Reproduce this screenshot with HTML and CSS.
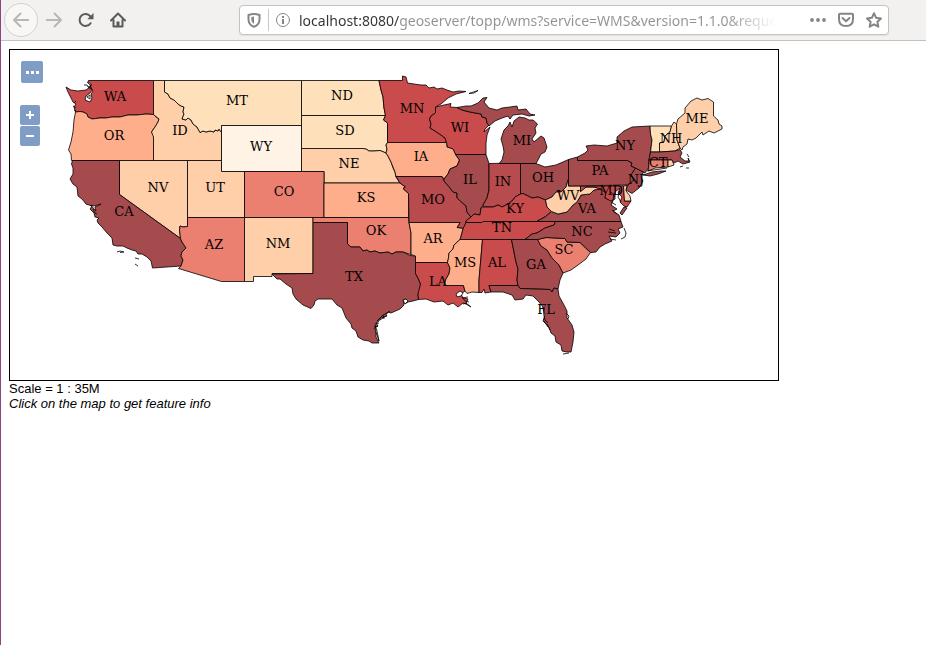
FILE: index.html
```html
<!DOCTYPE html>
<html lang="en">
<head>
<meta charset="utf-8">
<title>OpenLayers map preview</title>
<link rel="stylesheet" href="styles.css">
</head>
<body>
<header class="toolbar">
  <nav class="nav" aria-label="Browser navigation">
    <button class="tool back" type="button" aria-label="Back"><svg viewBox="0 0 16 16"><path d="M15.5 8H1M7.5 1.5L1 8l6.5 6.500"/></svg></button>
    <button class="tool forward" type="button" aria-label="Forward"><svg viewBox="0 0 16 16"><path d="M.5 8H15M8.500 1.500L15 8l-6.500 6.500"/></svg></button>
    <button class="tool" type="button" aria-label="Reload"><svg viewBox="0 0 16 16"><path d="M12.600 11.200A6 6 0 1 1 12.500 4.500"/><path d="M15.500 1v6.200H9.300z" class="solid"/></svg></button>
    <button class="tool" type="button" aria-label="Home"><svg viewBox="0 0 16 16"><path d="M1 8.500L8 1.500l7 7M3.500 8v6.500h9V8"/><path d="M6.500 15V9.500h3V15z" class="solid"/></svg></button>
  </nav>
  <form class="urlbar">
    <button class="mini" type="button" aria-label="Tracking protection"><svg viewBox="0 0 16 16"><path d="M2.500 3Q8 .9 13.500 3V8q-.5 5-5.500 6.800Q3 13 2.500 8z"/><path d="M8 4.500q-1.500.1-2.700.6V8q.3 2.600 2.700 4z" class="solid"/></svg></button>
    <span class="divider"></span>
    <button class="mini info" type="button" aria-label="Site information"><svg viewBox="0 0 16 16"><circle cx="8" cy="8" r="6.500"/><path d="M7 7h2v5H7zM7 4h2v2H7z" class="solid"/></svg></button>
    <input class="address" type="text" aria-label="Address" value="localhost:8080/geoserver/topp/wms?service=WMS&amp;version=1.1.0&amp;request=GetMap">
    <button class="mini action" type="button" aria-label="Page actions"><svg viewBox="0 0 16 16"><g class="solid"><circle cx="2" cy="8" r="1.900"/><circle cx="8" cy="8" r="1.900"/><circle cx="14" cy="8" r="1.900"/></g></svg></button>
    <button class="mini action" type="button" aria-label="Save to Pocket"><svg viewBox="0 0 16 16"><path d="M2 1.800h12q1 0 1 1V7q0 7-7 7T1 7V2.800q0-1 1-1zM4.500 6L8 9.300 11.500 6"/></svg></button>
    <button class="mini action" type="button" aria-label="Bookmark"><svg viewBox="0 0 16 16"><path d="M8 1.200l2.100 4.600 4.900.6-3.600 3.400.9 4.900L8 12.300l-4.300 2.400.9-4.900L1 6.400l4.900-.6z"/></svg></button>
  </form>
</header>

<main class="page">
  <section class="map" aria-label="Map">
    <svg class="states" viewBox="10 50 768 330">
      <g class="shapes">
        <path class="c-red" d="M88.500 80.500H153.500V114.500L146 114 137 115 128 115 120 117 112 117 106 118 100 118 92 119 88 117 87 114 83 112 80 111.500 75.500 112 74 107 76 104 73 102 71 98 68 92 66 87 71 90 78 91 86 90 90 87 91 84 88 82z"/>
        <path class="c-orange" d="M75.500 112L80 111.500 83 112 87 114 88 117 92 119 100 118 106 118 112 117 120 117 128 115 137 115 146 114 153.500 114.500 156 117 159 119 158 122 155 127 151.500 132 154 136 153.500 160.500H71.500L71 154 68.500 150 71 142 73 132 74 120z"/>
        <path class="c-light" d="M153.500 80.500H164.500V92L168 94 170 98 174 100 178 104 181 106 184 107 183 112 184 114 182 119 186 120 188 118 191 120 193 124 197 127 200 132.500 203 131 206 132 210 131 214 132 215 130 218 131 219 129 221.500 132.500V160.500H153.500V137L151.500 132 155 127 158 122 159 119 153.500 114.500z"/>
        <path class="c-cream" d="M164.500 80.500H301.500V125.500H221.500V132.500L219 129 218 131 215 130 214 132 210 131 206 132 203 131 200 132.500 197 127 193 124 191 120 188 118 186 120 182 119 184 114 183 112 184 107 181 106 178 104 174 100 170 98 168 94 164.500 92z"/>
        <path class="c-cream" d="M301.500 80.500H379L381 90 383 97 384 108 385.500 115.500H301.500z"/>
        <path class="c-cream" d="M301.500 115.500H385.500L383.500 120 387.500 123V142.500L386 145 387 149 386 153 380 150.500 374 151 369 151 366 149 363 149H301.500z"/>
        <path class="c-light" d="M301.500 148.500H363L366 149 369 151 374 151 380 150.500 386 153 388 156 391 162 393 168 395 172 396 177 400 183H324V171.500H301.500z"/>
        <path class="c-white" d="M221.500 125.500H301.500V171.500H221.500z"/>
        <path class="c-light" d="M119.500 160.500H187.500V226.500L183 227 180 226 179.500 230 180.500 238.500 119.500 194.500z"/>
        <path class="c-light" d="M187.500 160.500H221.500V171.500H244.500V217.500H187.500z"/>
        <path class="c-coral" d="M244.500 171.500H324V217.500H244.500z"/>
        <path class="c-dark" d="M72.500 160.500H119.500V194.500L180.500 238.500 182 242 186 248 182 252 181 256 183 260 181 266 152.500 268 151 261 147 257 142 254 138 254 136 251 132 250 127 248 123 246 117 246 113 245 112 238 107 233 102 227 98 223 97 220 99 218 95 217 94 213 90 209 92 206 86 204 82 199 78 196 77 187 73 184 70 179 73 174 73 168 71.500 164z"/>
        <path class="c-coral" d="M187.500 217.500H244.500V281.500H221.500L178.500 268.500 181 266 183 260 181 256 182 252 186 248 182 242 180.500 238.500 179.500 230 180 226 183 227 187.500 226.500z"/>
        <path class="c-light" d="M244.500 217.500H313V273.500H272V276.500H253.500V281.500H244.500z"/>
        <path class="c-orange" d="M324 183H400L405.500 187 403 188.500 408.500 193.500V217.500H324z"/>
        <path class="c-coral" d="M313 217.500H408.500L409 222.500 411 233V254.500L403 252 396 252 392 254 388 252 380 253 375 251 370 252 367 250 363 251 360 247 355 247 351 247 347.500 244V222.500H313z"/>
        <path class="c-dark" d="M313 222.500H347.500V244L351 247 355 247 360 247 363 251 367 250 370 252 375 251 380 253 388 252 392 254 396 252 403 252 410 255.500 415.500 256V273.500L418 278 420.500 284 420 291 418 294 418.500 299.500 413 301 408 302 405 304 406 299 403 300 404 305 400 309 391 313 388 312 386 315 387 316 381 318 378 322 376 323 378 326 374 328 376 331 376 337 379 343 372 343 369 341 363 340 358 337 356 331 352 328 351 324 346 318 342 308 337 305 332 299 322 299 318 299 315 301 314 305 311 308.500 303 305 296 299 293 294 292 288 286 284 280 279 277 279 272 274 313 273.500z"/>
        <path class="c-red" d="M379 80.500H402.500V76L406 77 407.500 83 414 84 421 85 426 85 429 88 434 87 437 89 442 88 447 90 453 92 459 91 466 91.500 456 94 448 98 441 104 435.500 107V113L431 116 429.500 119 431 124 430 128 435 131 441 135 445 138 446.500 142.500H387.500V123L383.500 120 385.500 115.500 384 108 383 97 381 90z"/>
        <path class="c-red" d="M435.500 107L444 105 451 103.500 450 107 457 107.500 462 110 470 112 481 114 482 117 486 118 487 123 489 125 485 129 484 132 490 127 487 135 486 143V154.500H455.500L453 149 447 147 446.500 142.500 445 138 441 135 435 131 430 128 431 124 429.500 119 431 116 435.500 113z"/>
        <path class="c-orange" d="M387.500 142.500H446.500L447 147 453 149 455.500 154.500 459.500 160 457 166 450 169 448 174 444 179 442 176.500H396L395 172 391 162 388 156 386 153 387 149 386 145z"/>
        <path class="c-wine" d="M396 176.500H442L444 181 450 188 453 192 457 193 457 198 466 206 467 212 471 217 466 221 466 226 463 228.500 457 227.500 460 222.500H409L408.500 193.500 403 188.500 405.500 187 400 183z"/>
        <path class="c-dark" d="M455.500 154.500H486L489 163.500V190L487 198 483 205 481 208 480 215 474 214 471 217 467 212 466 206 457 198 457 193 453 192 450 188 444 181 444 179 448 174 450 169 457 166 459.500 160z"/>
        <path class="c-wine" d="M489 163.500L520.500 163V194L515 197 513 200 508 204 502 207 498 205 493 207 483 207 483 205 487 198 489 190z"/>
        <path class="c-dark" d="M520.500 163.500H536L545 167 556 165 568.500 159.500V179L566 187 561 192 556 192 552 197 545.500 200 538 197 532 198 523 193.500 520.500 194z"/>
        <path class="c-dark" d="M457 107.500L466 106 471 106 478 103 483 98 487 97.500 484 102 489 108 497 110 502 108 510 107 517 106 518 110 526 109 530 114 535 115 529 116 522 114 513 115 510 119 508 116 502 118 495 121 489 126 487 123 486 118 482 117 481 114 470 112 462 110z"/>
        <path class="c-dark" d="M519 117L525 118 529 120 533 120 537.500 124 535 128 536 133 532 139 534 142 541 136 544 138 547 147 545 152 541 154 538 160 536 163.500 499 163.500 502 160 504 152 503 146 501 139 504 130 508 126 510 122 512 127 514 121z"/>
        <path class="c-red" d="M471 217L474 214 480 215 481 208 483 207 493 207 498 205 502 207 508 204 513 200 515 197 520.500 194 523 193.500 532 198 538 197 545.500 200 547 207 551.500 211.500 545 217 536.500 221.500H483L482 222.500H466L466 221z"/>
        <path class="c-red" d="M466 222.500H482L483 221.500H555.500L554 225 545 228 537 233 532 234 525 239.500H460L463 228.500z"/>
        <path class="c-orange" d="M409 222.500H460L457 227.500 463 228.500 460 239.500 454 245 453 249 449 253 448.500 258 447.500 262.500H415.500V256L411 254.500V233z"/>
        <path class="c-red" d="M415.500 262.500H447.500L450 268 449 274 446 279 444 285.500H463.500L465 291 461 294 463 298 468 299 466 303 471 307 466 304 463 303 458 307 453 303 448 305 443 301 434 302 426 299 418.500 299.500 418 294 420.500 284 418 278 415.500 273.500z"/>
        <path class="c-orange" d="M460 239.500H482.500L479 280V292.500L472 292 467 293.500 465 291 463.500 285.500H444L446 279 449 274 450 268 447.500 262.500 448.500 258 449 253 453 249 454 245z"/>
        <path class="c-red" d="M482.500 239.500H511.500L516 262 518 269 517 280 518 285.500H489L491 292 485 293 484 289 482 292.500 479 292.500V280z"/>
        <path class="c-dark" d="M511.500 239.500H537.500L541 246 547 250 552 258 559 265 563 273 560 280 558 289 554 288 552 292 550 289.500 520 288.500 518 285.500 517 280 518 269 516 262z"/>
        <path class="c-coral" d="M537.500 239.500L546 237.500 565 238.500 567 242 580 242.500 590.500 252.500 586 259 578 265 571 270 563 273 559 265 552 258 547 250 541 246z"/>
        <path class="c-dark" d="M489 285.500H518L520 288.500 550 289.500 552 292 554 288 558 289 559 296 564 305 567 311 567 318 572 325 574 332 573 342 571 352 567 352 562 351 561 345 556 342 555 336 551 333 549 327 546 324 543 321 545 315 543 307 539 302 533 296 526 295 523 299 515 300 512 295 503 292 491 292z"/>
        <path class="c-dark" d="M555.500 221.500H621L623 227 618 229 620 233 616 237 609 236 612 241 605 244 600 247 596 252 590.500 252.500 580 242.500 567 242 565 238.500 546 237.500 537.500 239.500H525L532 234 537 233 545 228 554 225z"/>
        <path class="c-dark" d="M536.500 221.500L545 217 551.500 211.500 558 214 567 212 573 205 577 202 581 195 590 194 594 190 601 189 606 193 605 198 613 201 611 205 617 209 613 211 619 215 621 221.500z"/>
        <path class="c-light" d="M568.500 179V186H580.500V191.500L586 187 594 187 601 189 594 190 590 194 581 195 577 202 573 205 567 212 558 214 551.500 211.500 547 207 545.500 200 552 197 556 192 561 192 566 187z"/>
        <path class="c-red" d="M580.500 186H623.500L624.500 201H631L627 207 624 206 620 202 622 197 618 193 620 188 615 192 615 199 611 201 605 198 606 193 601 189 594 187 586 187 580.500 191.500z"/>
        <path class="c-dark" d="M624 207L627 208 622 215 620 213z"/>
        <path class="c-light" d="M623.500 186L627 185.500 626 191 630 196 631 201H624.500z"/>
        <path class="c-dark" d="M568.500 159.500L577.500 157V160.500H627.500L632 163 631 166 635.500 168 631 175 634 180 628 185 568.500 186z"/>
        <path class="c-dark" d="M635.500 168L643.500 172 641 177 643 181 639 188 632 193.500 626 190 628 185 634 180 631 175z"/>
        <path class="c-dark" d="M577.500 157L585 153 588 150 586 146 594 145 607 146 617 143 617 137 624 131 632 127 650 126 650.500 134 652 140 650.500 152 649 160 648.500 168 645 173 635.500 168 631 166 632 163 627.500 160.500H577.500z"/>
        <path class="c-dark" d="M643 175L652 172 661 171 666 171 658 174 650 176z"/>
        <path class="c-cream" d="M650 126H671.500L670 132 665 136 664 142 659.500 143V152H650.500L652 140 650.500 134z"/>
        <path class="c-light" d="M671.500 126L674 122 676.500 124 677 140 680 148 675 151 659.500 152V143L664 142 665 136 670 132z"/>
        <path class="c-light" d="M676.500 124L678 119 685 113 685 108 691 101 697 98 702 100 708 98.500 713.500 102V116L718 120 719 124 722 126 722 129 714 133 709 131 703 135 702 132 696 138 692 140 688 139 687 144 683 147 682 150 680 148 677 140z"/>
        <path class="c-dark" d="M650.500 152H659.500L675 151 680 149.500 682 153 680 157 685 161 689 161 688 158 690 162 683 164 678 161 674 163 672 160 649 160z"/>
        <path class="c-coral" d="M649 160H668V167L655 168 648.500 171z"/>
        <path class="c-light" d="M668 160H672L674 165 668 167z"/>
      </g>
      <g class="water">
        <path d="M90 86l2 4-2 3-4 3-1 4 5 2 2-4-1-4 2-3z"/>
        <path d="M91 205l3 1 7-2-6 3 1 4-2-2z"/>
        <path d="M456 294l4-3 3 2-2 3-4 1z"/>
        <path d="M403 300l3-1 2 2-3 3z"/>
        <path d="M375 325l2 6 2 10-3-9z"/>
      </g>
      <g class="detail">
        <path d="M469 93.500L478 90.500 474 93z"/>
        <path d="M87 97l3-2v4zM84 85h3l1 2 3 2m-4-7l4 4m-3 1l4-2M74 103l2-2m-3 5l3 2m-2 2l2 1"/>
        <path d="M93 209l2 4 2 1M117 252l3-1 4 1-4 .5m15 5.500l4 1m-4 5l3 2"/>
        <path d="M390 311l-5 3-3 2-5 5m9-5l-6 4m3-5l1 4m-9 5l4-1m-4 4l3-1"/>
        <path d="M543 307l1 9 1 4 3 3m-4-2l4 6m-1-3l3 6m16-17l3 3-1 3M563 354l6-1"/>
        <path d="M462 297l3 4 4 1m-6 2l4-1m-5-5l6-1"/>
        <path d="M624 228l2 5-1 4-4 2m-13-7l8 1m-7-4l6 2m-5 8l6 1M611 202l5 3m-4 5l5 4m-6-22l4 5m5-7l-2 7 3 5m-7-9l-1 8M686 168h3m-9-1l3-1m4-12l2 3M667 168l-20 3"/>
      </g>
      <g class="names">
        <text x="115" y="101">WA</text><text x="114" y="140">OR</text><text x="180" y="135">ID</text>
        <text x="237" y="105">MT</text><text x="342" y="100">ND</text><text x="345" y="135">SD</text>
        <text x="349" y="168">NE</text><text x="261" y="151">WY</text><text x="412" y="113">MN</text>
        <text x="460" y="132">WI</text><text x="522" y="145">MI</text><text x="421" y="161">IA</text>
        <text x="470" y="184">IL</text><text x="503" y="186">IN</text><text x="543" y="182">OH</text>
        <text x="366" y="202">KS</text><text x="433" y="204">MO</text><text x="284" y="196">CO</text>
        <text x="158" y="192">NV</text><text x="215" y="192">UT</text><text x="124" y="216">CA</text>
        <text x="214" y="249">AZ</text><text x="278" y="248">NM</text><text x="376" y="235">OK</text>
        <text x="354" y="281">TX</text><text x="433" y="243">AR</text><text x="438" y="286">LA</text>
        <text x="465" y="267">MS</text><text x="497" y="267">AL</text><text x="536" y="269">GA</text>
        <text x="546" y="314">FL</text><text x="564" y="254">SC</text><text x="582" y="236">NC</text>
        <text x="587" y="213">VA</text><text x="568" y="200">WV</text><text x="515" y="213">KY</text>
        <text x="502" y="232">TN</text><text x="600" y="175">PA</text><text x="625" y="150">NY</text>
        <text x="636" y="184">NJ</text><text x="611" y="195">MD</text><text x="658" y="167">CT</text>
        <text x="671" y="143">NH</text><text x="697" y="123">ME</text>
      </g>
    </svg>
    <button class="control options" type="button" aria-label="Toggle options"><i></i><i></i><i></i></button>
    <div class="zoom">
      <button class="control" type="button" aria-label="Zoom in"><svg viewBox="0 0 8 8"><path d="M0 4h8M4 0v8"/></svg></button>
      <button class="control" type="button" aria-label="Zoom out"><svg viewBox="0 0 8 8"><path d="M0 4h8"/></svg></button>
    </div>
  </section>
  <p class="scale">Scale = 1 : 35M</p>
  <p class="hint">Click on the map to get feature info</p>
</main>
</body>
</html>
```
FILE: styles.css
```css
* { box-sizing: border-box; }

body {
  margin: 0;
  min-height: 100vh;
  border-left: 1px solid #8a4585;
  background: #fff;
  color: #000;
  font: 13px/15px "Liberation Sans", Arial, sans-serif;
}

button {
  display: flex;
  flex: none;
  align-items: center;
  justify-content: center;
  padding: 0;
  border: 0;
  background: none;
}

/* Browser toolbar */
.toolbar {
  display: flex;
  align-items: center;
  height: 41px;
  padding: 0 37px 0 3px;
  border-bottom: 1px solid #c4c1be;
  background: #f2f1f0;
}

.nav {
  display: flex;
  flex: none;
  align-items: center;
  width: 235px;
}

.tool {
  width: 32px;
  height: 34px;
  color: #5b5b5b;
}

.tool svg,
.mini svg {
  width: 16px;
  height: 16px;
  fill: none;
  stroke: currentColor;
  stroke-width: 2;
  stroke-linejoin: round;
  stroke-linecap: round;
}

.toolbar .solid {
  fill: currentColor;
  stroke: none;
}

.back {
  width: 34px;
  border: 1px solid #d4d2d0;
  border-radius: 50%;
  background: #f8f7f6;
}

.back,
.forward { color: #b9b8b7; }

.urlbar {
  display: flex;
  flex: 1;
  align-items: center;
  height: 30px;
  padding: 0 0 0 6px;
  border: 1px solid #c6c3c0;
  border-radius: 4px;
  background: #fff;
  box-shadow: 0 1px 1px #e2e0de;
}

.mini {
  width: 16px;
  color: #858585;
}

.divider {
  width: 1px;
  height: 22px;
  margin: 0 6px;
  background: #c8c8c8;
}

.info svg { stroke-width: 1; }

.address {
  flex: 1;
  min-width: 0;
  height: 28px;
  margin: 0 28px 0 8px;
  padding: 0;
  border: 0;
  outline: 0;
  font: 14px/20px "Noto Sans", sans-serif;
  background: linear-gradient(90deg, #333 101px, #929292 101px, #929292 calc(100% - 50px), transparent);
  background-clip: text;
  -webkit-background-clip: text;
  color: transparent;
}

.action { width: 28px; }

/* Map */
.page { padding: 8px; }

.map {
  position: relative;
  max-width: 770px;
  border: 1px solid #000;
}

.states {
  display: block;
  width: 100%;
}

.shapes path,
.water path,
.detail path {
  stroke: #000;
  stroke-width: .8;
  stroke-linejoin: round;
}

.water path { fill: #fff; }

.detail path { fill: none; }

.c-dark { fill: #a54b4d; }
.c-wine { fill: #b74b4d; }
.c-red { fill: #c94b4c; }
.c-coral { fill: #eb8070; }
.c-orange { fill: #feae8a; }
.c-light { fill: #fecfa9; }
.c-cream { fill: #fee0ba; }
.c-white { fill: #fff3e6; }

.names {
  font: 13px "DejaVu Serif", serif;
  text-anchor: middle;
}

.control {
  width: 20px;
  height: 20px;
  border-radius: 2px;
  background: #7f9dc5;
}

.control svg {
  width: 8px;
  height: 8px;
  stroke: #fff;
  stroke-width: 2;
}

.options {
  position: absolute;
  top: 11px;
  left: 11px;
  gap: 2px;
  width: 22px;
  height: 22px;
}

.options i {
  width: 3px;
  height: 3px;
  background: #fff;
}

.zoom {
  position: absolute;
  top: 55px;
  left: 10px;
  display: grid;
  gap: 1px;
}

.scale,
.hint { margin: 0; }

.hint { font-style: italic; }
```
